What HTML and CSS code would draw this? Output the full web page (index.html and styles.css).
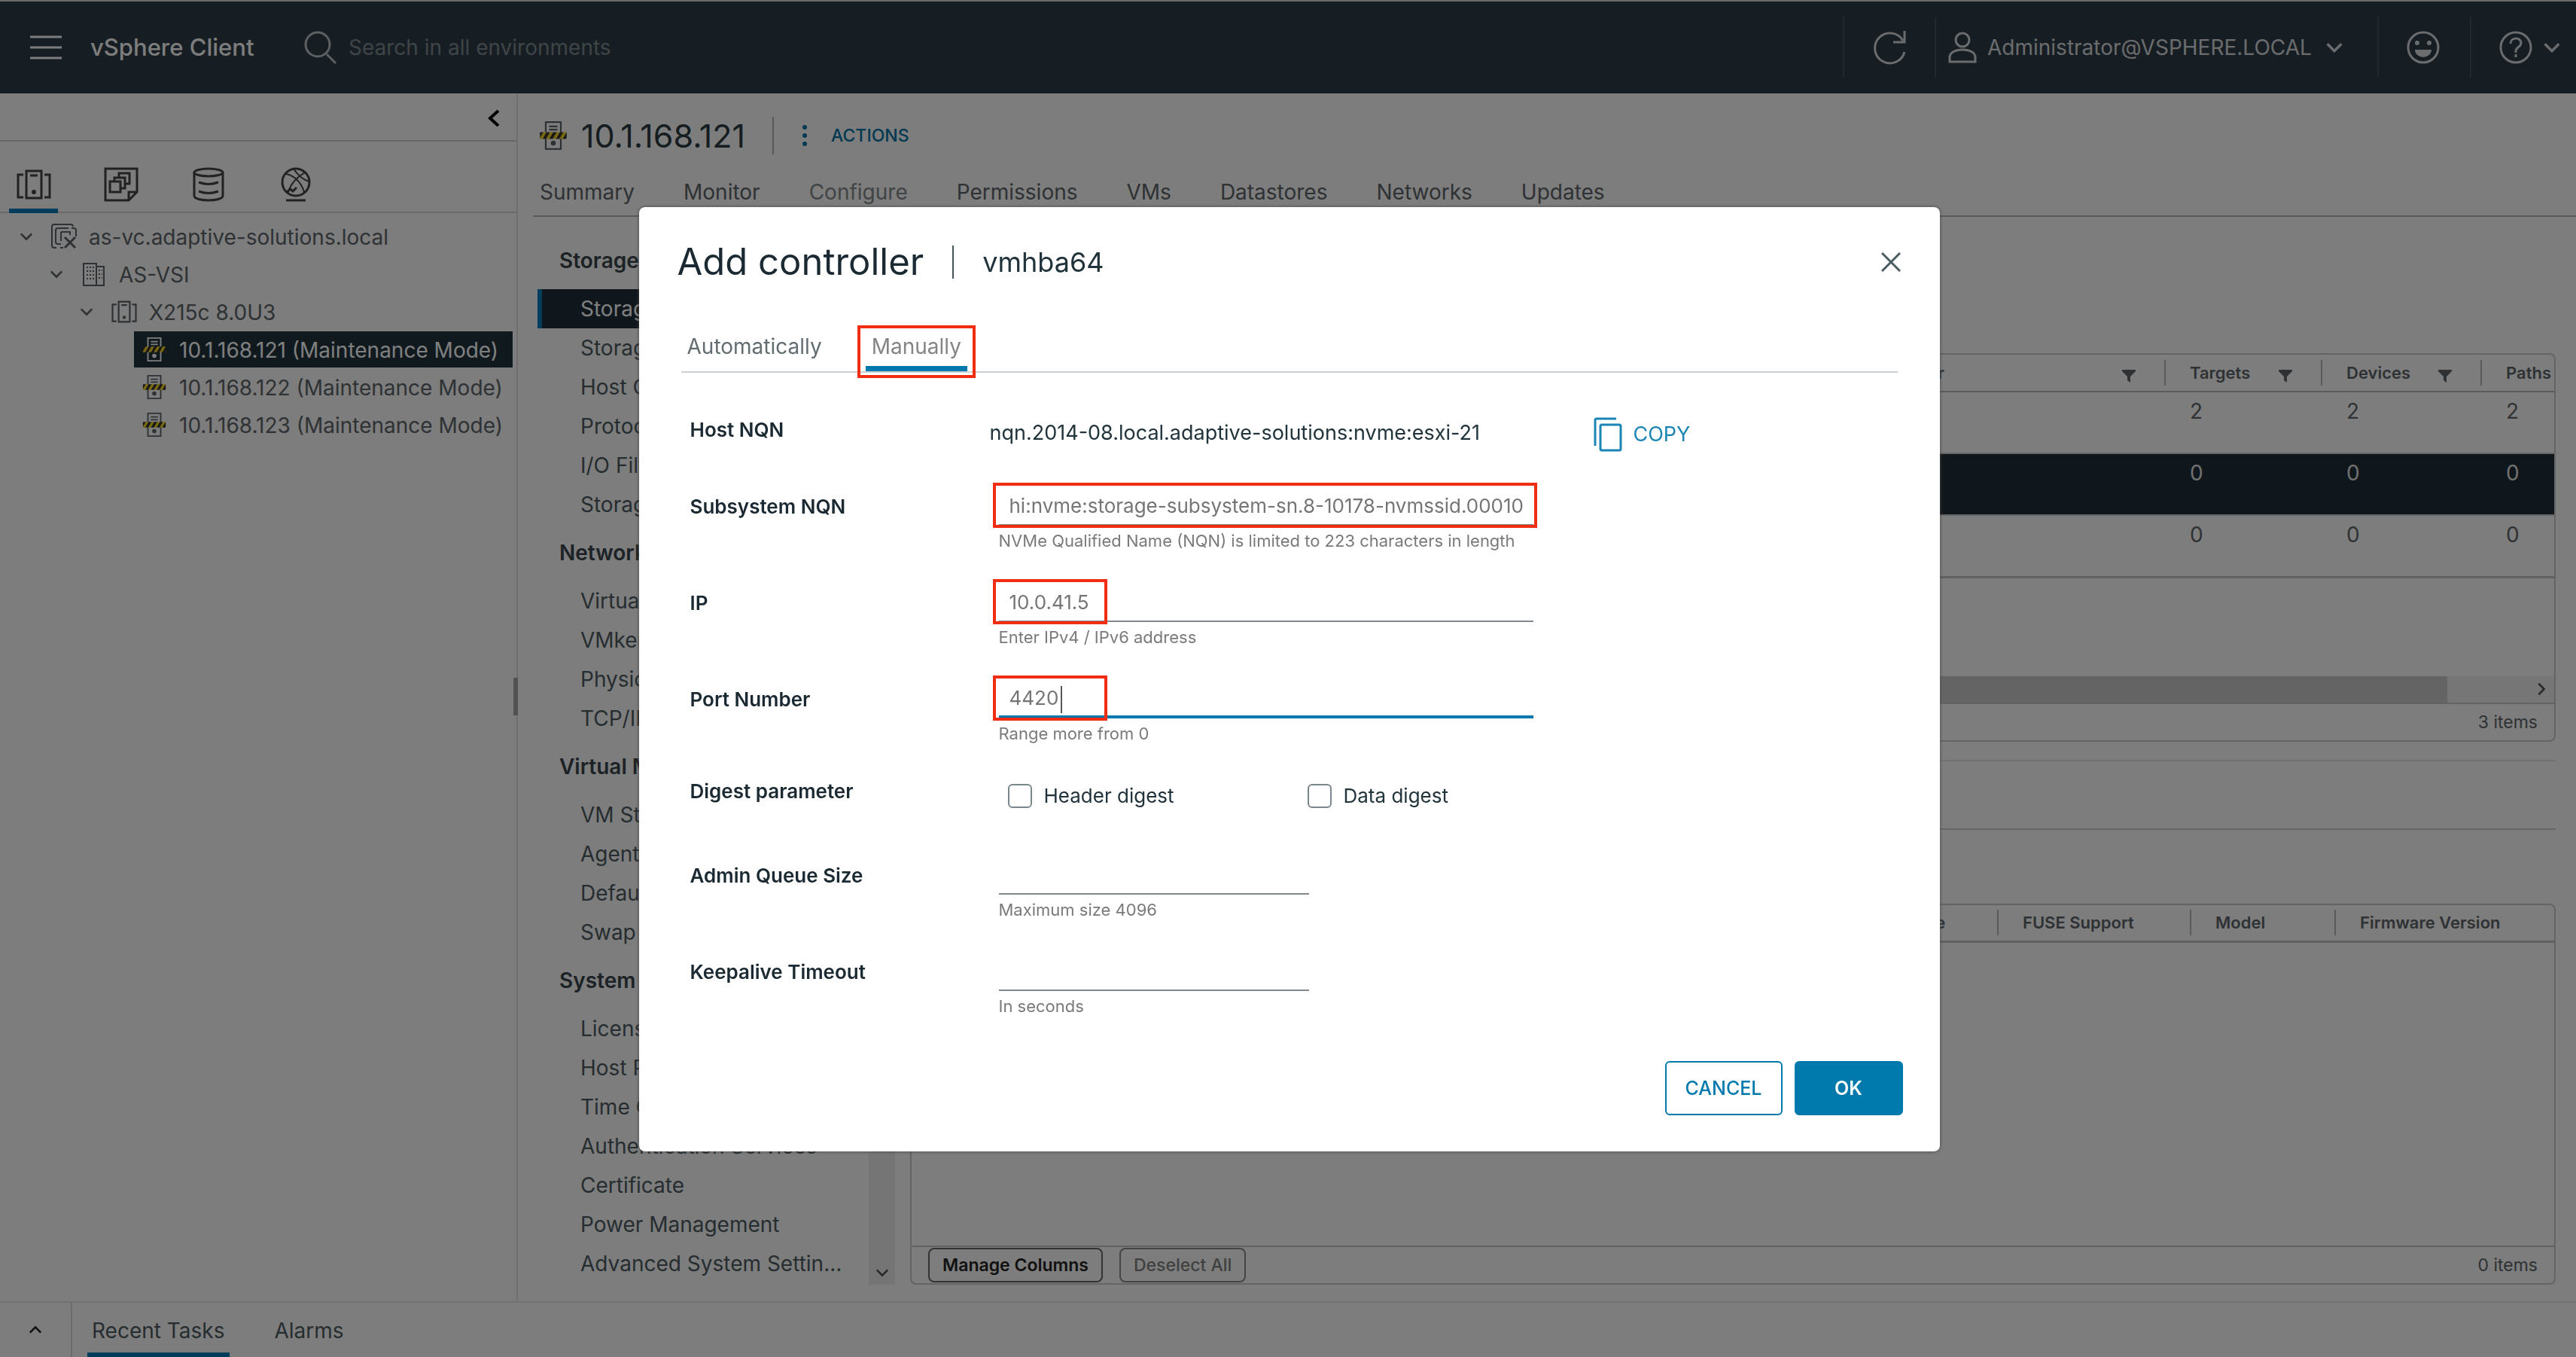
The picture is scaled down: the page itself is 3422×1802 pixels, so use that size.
FILE: index.html
```html
<!DOCTYPE html>
<html lang="en">
<head>
<meta charset="utf-8">
<title>vSphere Client</title>
<link rel="stylesheet" href="styles.css">
</head>
<body>
<svg class="sprite" aria-hidden="true">
  <defs>
    <pattern id="hazard" width="8" height="8" patternUnits="userSpaceOnUse" patternTransform="skewX(-30)">
      <rect width="8" height="8" fill="#f0d020"/><rect width="4" height="8" fill="#333"/>
    </pattern>
  </defs>
  <symbol id="i-host" viewBox="0 0 32 36">
    <path d="M7 2h18v32H7z" fill="none" stroke="currentColor" stroke-width="2"/>
    <path d="M11 7h10M11 11h10" stroke="currentColor" stroke-width="2"/>
    <rect x="0" y="14" width="32" height="8" fill="url(#hazard)"/>
    <circle cx="16" cy="27" r="3" fill="currentColor"/>
  </symbol>
  <symbol id="i-cluster" viewBox="0 0 46 40">
    <path d="M13 2h20v36H13zM9 7H2v30h7M37 7h7v30h-7M18 8h10" fill="none" stroke="currentColor" stroke-width="3"/>
    <circle cx="23" cy="30" r="3" fill="currentColor"/>
  </symbol>
  <symbol id="i-chevron" viewBox="0 0 20 12">
    <path d="M2 2l8 8 8-8" fill="none" stroke="currentColor" stroke-width="3"/>
  </symbol>
  <symbol id="i-filter" viewBox="0 0 18 18">
    <path d="M0 1h18v2l-7 7v8l-4-3v-5L0 3z" fill="currentColor"/>
  </symbol>
</svg>

<div class="app">
  <header class="topbar">
    <button class="icon-btn menu" aria-label="Menu">
      <svg width="42" height="32" viewBox="0 0 42 32"><path d="M0 2h42M0 16h42M0 30h42" stroke="currentColor" stroke-width="3"/></svg>
    </button>
    <span class="brand">vSphere Client</span>
    <label class="search">
      <svg width="44" height="44" viewBox="0 0 44 44" fill="none" stroke="currentColor" stroke-width="3"><circle cx="18" cy="18" r="16"/><path d="M30 31l12 12"/></svg>
      <input type="search" aria-label="Search" placeholder="Search in all environments">
    </label>
    <div class="top-cell refresh">
      <button class="icon-btn" aria-label="Refresh">
        <svg width="44" height="46" viewBox="0 0 44 46" fill="none" stroke="currentColor" stroke-width="3"><path d="M42 29A20 20 0 1 1 40 14M42 1v15H27"/></svg>
      </button>
    </div>
    <div class="top-cell user">
      <button class="icon-btn">
        <svg width="38" height="42" viewBox="0 0 38 42" fill="none" stroke="currentColor" stroke-width="3"><circle cx="19" cy="11" r="9"/><path d="M2 40v-6c0-6 7-10 17-10s17 4 17 10v6z"/></svg>
        <span class="user-name">Administrator@VSPHERE.LOCAL</span>
        <svg class="chev-top"><use href="#i-chevron"/></svg>
      </button>
    </div>
    <div class="top-cell smile">
      <button class="icon-btn" aria-label="Feedback">
        <svg width="44" height="44" viewBox="0 0 44 44"><circle cx="22" cy="22" r="20" fill="none" stroke="currentColor" stroke-width="3"/><circle cx="14" cy="16" r="3" fill="currentColor"/><circle cx="30" cy="16" r="3" fill="currentColor"/><path d="M11 25h22a11 10 0 0 1-22 0z" fill="currentColor"/></svg>
      </button>
    </div>
    <div class="top-cell help">
      <button class="icon-btn" aria-label="Help">
        <svg width="44" height="44" viewBox="0 0 44 44" fill="none" stroke="currentColor" stroke-width="3"><circle cx="22" cy="22" r="20"/><path d="M15 17c0-9 14-9 14-1 0 6-7 5-7 11v2"/><path d="M22 31v4"/></svg>
        <svg class="chev-top"><use href="#i-chevron"/></svg>
      </button>
    </div>
  </header>

  <div class="workspace">
    <aside class="sidebar">
      <div class="collapse">
        <button class="icon-btn" aria-label="Collapse">
          <svg width="16" height="22" viewBox="0 0 16 22"><path d="M14 1L3 11l11 10" fill="none" stroke="currentColor" stroke-width="4"/></svg>
        </button>
      </div>
      <nav class="inv-tabs" aria-label="Inventory">
        <button class="inv-tab active" aria-label="Hosts and clusters"><svg width="46" height="40"><use href="#i-cluster"/></svg></button>
        <button class="inv-tab" aria-label="VMs and templates"><svg width="46" height="46" viewBox="0 0 46 46" fill="none" stroke="currentColor" stroke-width="3"><path d="M2 2h42v31L33 44H2zM44 33H33v11"/><path d="M8 19h14v14H8zM14 19v-5h14v14h-6M20 14V8h14v14h-6"/></svg></button>
        <button class="inv-tab" aria-label="Storage"><svg width="42" height="46" viewBox="0 0 42 46" fill="none" stroke="currentColor" stroke-width="3"><ellipse cx="21" cy="7" rx="19" ry="5"/><path d="M2 7v31c0 8 38 8 38 0V7M8 20c8 3 18 3 26 0M8 32c8 3 18 3 26 0"/></svg></button>
        <button class="inv-tab" aria-label="Networking"><svg width="42" height="46" viewBox="0 0 42 46" fill="none" stroke="currentColor" stroke-width="3"><circle cx="21" cy="20" r="18"/><path d="M8 9c10 2 20 10 24 24M33 7C23 13 14 22 11 33M18 2c5 8 12 14 20 17" stroke-width="2"/><path d="M9 33l5-4 3 3 5-5M8 44h26"/></svg></button>
      </nav>
      <ul class="tree">
        <li class="node lvl1"><svg class="chev"><use href="#i-chevron"/></svg>
          <svg class="t-icon" viewBox="0 0 34 34" fill="none" stroke="currentColor" stroke-width="2"><path d="M7 32H4a3 3 0 0 1-3-3V4a3 3 0 0 1 3-3h22a3 3 0 0 1 3 3M13 27H9a3 3 0 0 1-3-3V9a3 3 0 0 1 3-3h14M16 32h-4M33 17V9a3 3 0 0 0-3-3h-3M13 11h12v4M13 11v12"/><path d="M18 18l14 14M32 18L18 32" stroke-width="3"/></svg>
          <span>as-vc.adaptive-solutions.local</span></li>
        <li class="node lvl2"><svg class="chev"><use href="#i-chevron"/></svg>
          <svg class="t-icon" viewBox="0 0 34 34" fill="none" stroke="currentColor" stroke-width="2"><path d="M3 3h17v29H3zM20 7h10v25H20"/><path d="M7 8h10M7 13h10M7 18h10M7 23h10M23 12h5M23 17h5M23 22h5" stroke-dasharray="2 2"/></svg>
          <span>AS-VSI</span></li>
        <li class="node lvl3"><svg class="chev"><use href="#i-chevron"/></svg>
          <svg class="t-icon"><use href="#i-cluster"/></svg>
          <span>X215c 8.0U3</span></li>
        <li class="node host selected"><svg class="t-icon"><use href="#i-host"/></svg><span>10.1.168.121 (Maintenance Mode)</span></li>
        <li class="node host"><svg class="t-icon"><use href="#i-host"/></svg><span>10.1.168.122 (Maintenance Mode)</span></li>
        <li class="node host"><svg class="t-icon"><use href="#i-host"/></svg><span>10.1.168.123 (Maintenance Mode)</span></li>
      </ul>
      <span class="splitter"></span>
    </aside>

    <main class="main">
      <div class="title-row">
        <svg class="title-icon"><use href="#i-host"/></svg>
        <h1>10.1.168.121</h1>
        <button class="actions">
          <svg width="6" height="30" viewBox="0 0 6 30" fill="currentColor"><circle cx="3" cy="4" r="3"/><circle cx="3" cy="15" r="3"/><circle cx="3" cy="26" r="3"/></svg>
          ACTIONS
        </button>
      </div>
      <nav class="obj-tabs">
        <a href="#">Summary</a><a href="#">Monitor</a><a href="#" class="current">Configure</a><a href="#">Permissions</a><a href="#">VMs</a><a href="#">Datastores</a><a href="#">Networks</a><a href="#">Updates</a>
      </nav>
      <div class="content">
        <nav class="settings">
          <div class="settings-list">
            <h2>Storage</h2>
            <a href="#" class="on">Storage Adapters</a><a href="#">Storage Devices</a><a href="#">Host Cache Configur...</a><a href="#">Protocol Endpoints</a><a href="#">I/O Filters</a><a href="#">Storage Providers</a>
            <h2>Networking</h2>
            <a href="#">Virtual switches</a><a href="#">VMkernel adapters</a><a href="#">Physical adapters</a><a href="#">TCP/IP configuration</a>
            <h2>Virtual Machines</h2>
            <a href="#">VM Startup/Shutdown</a><a href="#">Agent VM Settings</a><a href="#">Default VM Compati...</a><a href="#">Swap File Location</a>
            <h2>System</h2>
            <a href="#">Licensing</a><a href="#">Host Profile</a><a href="#">Time Configuration</a><a href="#">Authentication Services</a><a href="#">Certificate</a><a href="#">Power Management</a><a href="#">Advanced System Settin...</a>
          </div>
          <div class="v-scroll"><svg class="chev"><use href="#i-chevron"/></svg></div>
        </nav>
        <section class="panels">
          <div class="grid-card adapters">
            <table>
              <colgroup><col><col class="c-ident"><col class="c-targets"><col class="c-devices"><col class="c-paths"></colgroup>
              <thead><tr>
                <th>Adapter</th>
                <th><div class="th">Identifier<svg><use href="#i-filter"/></svg></div></th>
                <th><div class="th">Targets<svg><use href="#i-filter"/></svg></div></th>
                <th><div class="th">Devices<svg><use href="#i-filter"/></svg></div></th>
                <th><div class="th">Paths</div></th>
              </tr></thead>
              <tbody>
                <tr><td>vmhba0</td><td></td><td>2</td><td>2</td><td>2</td></tr>
                <tr class="picked"><td>vmhba64</td><td></td><td>0</td><td>0</td><td>0</td></tr>
                <tr><td>vmhba65</td><td></td><td>0</td><td>0</td><td>0</td></tr>
              </tbody>
            </table>
            <div class="blank"></div>
            <div class="h-scroll"><span class="thumb"></span><svg class="chev"><use href="#i-chevron"/></svg></div>
            <div class="card-foot"><span class="count">3 items</span></div>
          </div>
          <div class="detail-head"></div>
          <div class="grid-card controllers">
            <table>
              <colgroup><col><col class="c-transport"><col class="c-fuse"><col class="c-model"><col class="c-firmware"></colgroup>
              <thead><tr>
                <th>Name</th>
                <th><div class="th">Transport Type</div></th>
                <th><div class="th">FUSE Support</div></th>
                <th><div class="th">Model</div></th>
                <th><div class="th">Firmware Version</div></th>
              </tr></thead>
            </table>
            <div class="blank"></div>
            <div class="card-foot">
              <button class="small-btn">Manage Columns</button>
              <button class="small-btn" disabled>Deselect All</button>
              <span class="count">0 items</span>
            </div>
          </div>
        </section>
      </div>
    </main>
  </div>

  <footer class="taskbar">
    <button class="expand" aria-label="Expand"><svg class="chev up"><use href="#i-chevron"/></svg></button>
    <button class="task-tab active">Recent Tasks</button>
    <button class="task-tab">Alarms</button>
  </footer>
</div>

<div class="backdrop">
  <section class="modal" role="dialog" aria-labelledby="dlg-title">
    <div class="modal-head">
      <h2 id="dlg-title">Add controller</h2>
      <span class="adapter-name">vmhba64</span>
      <button class="icon-btn close" aria-label="Close">
        <svg width="26" height="26" viewBox="0 0 26 26"><path d="M1 1l24 24M25 1L1 25" stroke="currentColor" stroke-width="3"/></svg>
      </button>
    </div>
    <div class="modal-tabs">
      <button class="m-tab">Automatically</button>
      <button class="m-tab active">Manually<span class="mark"></span></button>
    </div>
    <form class="form">
      <div class="row host-row">
        <span class="label">Host NQN</span>
        <span class="nqn">nqn.2014-08.local.adaptive-solutions:nvme:esxi-21</span>
        <button type="button" class="copy">
          <svg width="38" height="46" viewBox="0 0 38 46" fill="none" stroke="currentColor" stroke-width="3"><rect x="9" y="10" width="27" height="34" rx="2"/><path d="M30 2H4a2 2 0 0 0-2 2v34"/></svg>
          COPY
        </button>
      </div>
      <div class="row">
        <label class="label" for="nqn">Subsystem NQN</label>
        <div class="field">
          <input id="nqn" type="text" value="hi:nvme:storage-subsystem-sn.8-10178-nvmssid.00010">
          <span class="hint">NVMe Qualified Name (NQN) is limited to 223 characters in length</span>
          <span class="mark wide"></span>
        </div>
      </div>
      <div class="row">
        <label class="label" for="ip">IP</label>
        <div class="field">
          <input id="ip" type="text" value="10.0.41.5">
          <span class="hint">Enter IPv4 / IPv6 address</span>
          <span class="mark"></span>
        </div>
      </div>
      <div class="row">
        <label class="label" for="port">Port Number</label>
        <div class="field focus">
          <input id="port" type="text" value="4420">
          <span class="hint">Range more from 0</span>
          <span class="mark"></span>
          <span class="caret"></span>
        </div>
      </div>
      <div class="row digest">
        <span class="label">Digest parameter</span>
        <div class="checks">
          <label><input type="checkbox">Header digest</label>
          <label><input type="checkbox">Data digest</label>
        </div>
      </div>
      <div class="row">
        <label class="label" for="queue">Admin Queue Size</label>
        <div class="field short">
          <input id="queue" type="text">
          <span class="hint">Maximum size 4096</span>
        </div>
      </div>
      <div class="row">
        <label class="label" for="keep">Keepalive Timeout</label>
        <div class="field short">
          <input id="keep" type="text">
          <span class="hint">In seconds</span>
        </div>
      </div>
      <div class="buttons">
        <button type="button" class="btn">CANCEL</button>
        <button type="button" class="btn primary">OK</button>
      </div>
    </form>
  </section>
</div>
</body>
</html>
```
FILE: styles.css
```css
* { box-sizing: border-box; }
body {
  margin: 0;
  background: #fafafa;
  color: #5c6468;
  font-family: Inter, "Open Sans", sans-serif;
  font-size: 28px;
  line-height: 40px;
}
h1, h2, ul { margin: 0; padding: 0; font-weight: 400; }
ul { list-style: none; }
a { color: inherit; text-decoration: none; }
button, input { font: inherit; color: inherit; }
button { background: none; border: 0; padding: 0; margin: 0; }
svg { display: block; flex: none; }
.sprite { position: absolute; width: 0; height: 0; }
.chev { width: 18px; height: 12px; }
.icon-btn { display: flex; align-items: center; }

.app { min-height: 100vh; display: flex; flex-direction: column; }

/* Top bar */
.topbar {
  height: 124px;
  display: flex;
  align-items: center;
  background: #2f3d47;
  border-top: 2px solid #d0dad8;
  color: #fafafa;
}
.menu { margin: 0 38px 0 40px; }
.brand { width: 284px; font-size: 31px; font-weight: 500; white-space: nowrap; }
.search { display: flex; align-items: center; gap: 15px; color: #b9c0c4; flex: 1; }
.search input { flex: 1; border: 0; background: none; padding: 0; outline: 0; }
.search input::placeholder { color: #7f898e; opacity: 1; }
.top-cell { height: 80px; display: flex; align-items: center; border-left: 2px solid #45535c; color: #d4d8da; }
.refresh { width: 122px; padding-left: 38px; }
.user { width: 588px; padding-left: 16px; }
.smile { width: 123px; padding-left: 37px; }
.help { width: 141px; padding-left: 37px; }
.user-name { margin: 0 18px 0 14px; }
.chev-top { width: 24px; height: 14px; }
.help .chev-top { margin-left: 14px; }

/* Inventory sidebar */
.workspace { flex: 1; display: flex; }
.sidebar { width: 688px; flex: none; position: relative; border-right: 2px solid #dfdfdf; }
.collapse { height: 64px; display: flex; justify-content: flex-end; align-items: center; padding: 4px 22px 0 0; color: #000; border-bottom: 2px solid #ccc; }
.inv-tabs { height: 95px; display: flex; gap: 51px; padding-left: 12px; border-bottom: 2px solid #d4d4d4; }
.inv-tab { width: 65px; height: 95px; display: flex; justify-content: center; align-items: center; padding-top: 24px; border-bottom: 6px solid transparent; color: #444; }
.inv-tab.active { border-bottom-color: #0079b8; }
.tree { padding: 6px 5px 0 0; }
.node { height: 50px; display: flex; align-items: center; white-space: nowrap; }
.node span { padding-top: 2px; }
.node .t-icon { width: 34px; height: 34px; margin: 0 16px 0 24px; }
.lvl1 { padding-left: 26px; }
.lvl2 { padding-left: 66px; }
.lvl3 { padding-left: 106px; }
.host { margin-left: 178px; }
.host .t-icon { margin: 0 16px 0 10px; }
.selected { background: linear-gradient(#1f323c, #1f323c) 0 1px / 100% 48px no-repeat; color: #fff; }
.splitter { position: absolute; right: -2px; top: 776px; width: 6px; height: 50px; background: #a5a5a5; }

/* Object header */
.main { flex: 1; min-width: 0; display: flex; flex-direction: column; padding: 26px 0 22px 20px; }
.title-row { height: 60px; display: flex; align-items: center; padding-left: 8px; }
.title-icon { width: 38px; height: 40px; }
.title-row h1 { margin-left: 18px; padding-right: 36px; font-size: 43px; line-height: 50px; color: #2c3a42; border-right: 2px solid #b0b0b0; }
.actions { display: flex; align-items: center; gap: 32px; margin-left: 38px; font-size: 23px; font-weight: 500; color: #0072a3; }
.obj-tabs { height: 78px; display: flex; gap: 65px; padding: 25px 0 0 9px; border-bottom: 2px solid #b4b4b4; white-space: nowrap; }
.obj-tabs .current { color: #82888b; }

/* Settings menu */
.content { flex: 1; display: flex; padding: 20px 27px 0 6px; }
.settings { width: 475px; flex: none; display: flex; }
.settings-list { width: 440px; }
.settings h2 { padding: 18px 0 18px 29px; font-size: 28px; line-height: 40px; font-weight: 600; color: #39454b; }
.settings a { display: block; padding: 6px 0 6px 57px; white-space: nowrap; color: #4d5a61; }
.settings .on { background: #202e38; color: #fff; border-left: 6px solid #0079b8; padding-left: 51px; }
.v-scroll { width: 35px; display: flex; align-items: flex-end; justify-content: center; padding-bottom: 10px; background: #ebebeb; color: #555; }

/* Grids */
.panels { flex: 1; min-width: 0; margin-left: 20px; padding-top: 161px; display: flex; flex-direction: column; }
.grid-card { display: flex; flex-direction: column; border: 2px solid #c8c8c8; border-radius: 8px; overflow: hidden; }
.grid-card table { width: 100%; table-layout: fixed; border-collapse: collapse; }
.grid-card th { height: 49px; padding: 0; text-align: left; font-size: 22px; line-height: 34px; font-weight: 600; border-bottom: 2px solid #b8b8b8; }
.th { display: flex; justify-content: space-between; align-items: center; padding: 0 38px 0 32px; border-left: 2px solid #b4b4b4; white-space: nowrap; }
.th svg { width: 18px; height: 18px; margin-top: 8px; }
.grid-card td { height: 82px; padding: 5px 0 0 34px; vertical-align: top; border-bottom: 2px solid #ccc; }
.grid-card .picked { background: #1f2e38; color: #e0e0e0; }
.adapters tbody tr:last-child td, .controllers th { border-bottom: 3px solid #c0c0c0; }
.c-ident { width: 422px; }
.c-targets { width: 208px; }
.c-devices { width: 212px; }
.c-paths { width: 98px; }
.c-transport { width: 265px; }
.c-fuse { width: 256px; }
.c-model { width: 192px; }
.c-firmware { width: 292px; }
.adapters .blank { height: 130px; }
.controllers { flex: 1; }
.controllers .blank { flex: 1; }
.h-scroll { height: 35px; display: flex; align-items: center; justify-content: space-between; padding-right: 8px; background: #ececec; color: #555; }
.thumb { width: 2040px; height: 35px; background: #c8c8c8; }
.h-scroll .chev { transform: rotate(-90deg); }
.card-foot { height: 50px; display: flex; align-items: center; gap: 22px; padding: 0 22px; border-top: 2px solid #c4c4c4; font-size: 23px; }
.count { margin-left: auto; }
.small-btn { height: 46px; padding: 0 17px; border: 2px solid #666; border-radius: 8px; font-weight: 600; color: #222; }
.small-btn:disabled { color: #808080; border-color: #888; font-weight: 500; }
.detail-head { height: 93px; margin: 24px 0 98px; border-top: 2px solid #e4e4e4; border-bottom: 2px solid #ccc; }

/* Task bar */
.taskbar { height: 74px; display: flex; border-top: 2px solid #e4e4e4; }
.expand { width: 96px; display: flex; align-items: center; justify-content: center; border-right: 2px solid #d8d8d8; color: #222; }
.up { transform: rotate(180deg); }
.task-tab { margin-left: 20px; padding: 8px 6px 0; border-bottom: 6px solid transparent; color: #4d5a61; }
.task-tab.active { border-bottom-color: #0079b8; }
.task-tab + .task-tab { margin-left: 54px; }

/* Dialog */
.backdrop { position: fixed; inset: 0; display: flex; align-items: center; justify-content: center; padding: 2px 0 0 3px; background: rgba(0, 0, 0, 0.5); font-size: 27px; }
.modal { width: 1728px; max-width: 96%; padding: 44px 49px 48px 56px; background: #fff; border-radius: 8px; box-shadow: 0 0 4px #444; color: #21333b; }
.modal-head { height: 58px; display: flex; align-items: center; padding-right: 3px; }
.modal-head h2 { margin-left: -5px; font-size: 49px; line-height: 58px; color: #1b2a32; }
.adapter-name { margin-left: 38px; padding-left: 38px; font-size: 36px; line-height: 44px; border-left: 2px solid #44525a; }
.close { margin-left: auto; color: #4a5b63; }
.modal-tabs { height: 118px; display: flex; align-items: flex-end; gap: 50px; margin-right: 7px; font-size: 28px; border-bottom: 2px solid #ccd0d2; }
.m-tab { position: relative; padding: 0 8px 6px; border-bottom: 7px solid transparent; color: #626c71; }
.m-tab.active { border-bottom-color: #0077ad; color: #858585; }
.mark { position: absolute; border: 4px solid #f02d10; pointer-events: none; }
.m-tab .mark { inset: -8px -11px -16px; }
.form { padding: 44px 0 0 12px; }
.row { display: grid; grid-template-columns: 398px 1fr; min-height: 128px; align-items: start; }
.label { padding-top: 12px; font-size: 26px; font-weight: 600; color: #1b2a32; }
.host-row { grid-template-columns: 398px 802px 1fr; min-height: 102px; }
.nqn { padding-top: 16px; }
.copy { display: flex; align-items: center; gap: 15px; padding-top: 15px; color: #1a85b5; }
.field { position: relative; width: 722px; padding-left: 12px; }
.short { width: 424px; }
.field input { display: block; width: 100%; height: 57px; padding: 6px 0 0 14px; border: 0; border-bottom: 2px solid #80898e; background: none; outline: 0; font-size: 26px; color: #757575; }
.focus input { border-bottom: 4px solid #0077ad; }
.hint { display: block; padding-top: 5px; font-size: 22px; line-height: 30px; color: #7a7a7a; white-space: nowrap; }
.field .mark { left: 4px; top: 0; width: 152px; height: 60px; }
.field .wide { width: 723px; }
.caret { position: absolute; left: 94px; top: 14px; width: 2px; height: 36px; background: #555; }
.digest { min-height: 106px; }
.digest .label { padding-top: 6px; }
.checks { display: flex; gap: 16px; padding: 12px 0 0 24px; font-size: 26px; }
.checks label { display: flex; align-items: center; gap: 16px; width: 382px; }
.checks input { appearance: none; width: 32px; height: 32px; margin: 0; border: 2px solid #78868e; border-radius: 6px; }
.buttons { display: flex; justify-content: flex-end; gap: 16px; padding-top: 22px; }
.btn { min-width: 144px; height: 72px; padding: 0 25px; border: 2px solid #0079ad; border-radius: 6px; font-size: 25px; font-weight: 500; color: #0079ad; }
.primary { background: #0079ad; color: #fff; font-weight: 600; }
```
